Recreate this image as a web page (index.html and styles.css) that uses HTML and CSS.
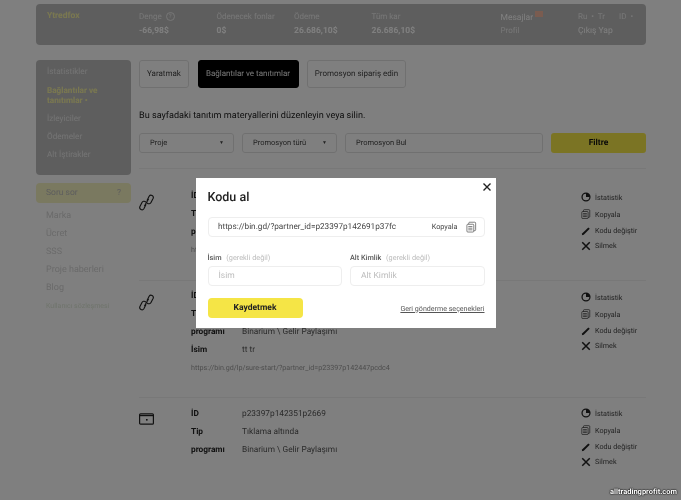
FILE: index.html
```html
<!DOCTYPE html>
<html lang="tr">
<head>
    <meta charset="UTF-8">
    <meta name="viewport" content="width=device-width, initial-scale=1.0">
    <title>Kodu al</title>
    <link rel="stylesheet" href="styles.css">
</head>
<body>
    <div class="page">
        <header class="topbar">
            <div class="brand">Ytredfox</div>
            <div class="stat">
                <div class="stat-label">Denge <span class="help">?</span></div>
                <div class="stat-value">-66,98$</div>
            </div>
            <div class="stat">
                <div class="stat-label">Ödenecek fonlar</div>
                <div class="stat-value">0$</div>
            </div>
            <div class="stat">
                <div class="stat-label">Ödeme</div>
                <div class="stat-value">26.686,10$</div>
            </div>
            <div class="stat stat-profit">
                <div class="stat-label">Tüm kar</div>
                <div class="stat-value">26.686,10$</div>
            </div>
            <div class="stat">
                <div class="stat-label stat-strong">Mesajlar <span class="msg-badge"></span></div>
                <div class="stat-label">Profil</div>
            </div>
            <div class="stat stat-lang">
                <div class="stat-label">Ru &nbsp;•&nbsp; Tr</div>
                <div class="stat-label stat-strong">Çıkış Yap</div>
            </div>
            <div class="stat">
                <div class="stat-label">ID &nbsp;•</div>
            </div>
        </header>

        <div class="layout">
            <aside class="side">
                <nav class="side-menu">
                    <a>İstatistikler</a>
                    <a class="current">Bağlantılar ve tanıtımlar •</a>
                    <a>İzleyiciler</a>
                    <a>Ödemeler</a>
                    <a>Alt İştirakler</a>
                </nav>
                <div class="ask"><span>Soru sor</span><span>?</span></div>
                <nav class="side-links">
                    <a>Marka</a>
                    <a>Ücret</a>
                    <a>SSS</a>
                    <a>Proje haberleri</a>
                    <a>Blog</a>
                    <a class="faint">Kullanıcı sözleşmesi</a>
                </nav>
            </aside>

            <main class="content">
                <div class="tabs">
                    <div class="tab tab-create">Yaratmak</div>
                    <div class="tab tab-links active">Bağlantılar ve tanıtımlar</div>
                    <div class="tab tab-order">Promosyon sipariş edin</div>
                </div>
                <p class="intro">Bu sayfadaki tanıtım materyallerini düzenleyin veya silin.</p>
                <div class="filters">
                    <div class="select"><span>Proje</span><span class="arrow">▼</span></div>
                    <div class="select"><span>Promosyon türü</span><span class="arrow">▼</span></div>
                    <div class="search">Promosyon Bul</div>
                    <div class="filter-btn">Filtre</div>
                </div>

                <section class="promo promo-first">
                    <svg class="promo-icon" viewBox="0 0 16 20"><use href="#i-link"/></svg>
                    <div class="promo-info">
                        <div class="info-row"><b>İD</b><span>p23397p142691p37fc</span></div>
                        <div class="info-row"><b>Tip</b><span>Tıklama altında</span></div>
                        <div class="info-row"><b>programı</b><span>Binarium \ Gelir Paylaşımı</span></div>
                        <div class="promo-url">https://bin.gd/?partner_id=p23397p142691p37fc</div>
                    </div>
                    <div class="actions">
                        <div class="action"><svg viewBox="0 0 12 12"><use href="#i-pie"/></svg>İstatistik</div>
                        <div class="action"><svg viewBox="0 0 12 12"><use href="#i-copy"/></svg>Kopyala</div>
                        <div class="action"><svg viewBox="0 0 12 12"><use href="#i-pen"/></svg>Kodu değiştir</div>
                        <div class="action"><svg viewBox="0 0 12 12"><use href="#i-x"/></svg>Silmek</div>
                    </div>
                </section>

                <section class="promo promo-second">
                    <svg class="promo-icon" viewBox="0 0 16 20"><use href="#i-link"/></svg>
                    <div class="promo-info">
                        <div class="info-row"><b>İD</b><span>p23397p142447pcdc4</span></div>
                        <div class="info-row"><b>Tip</b><span>Tıklama altında</span></div>
                        <div class="info-row"><b>programı</b><span>Binarium \ Gelir Paylaşımı</span></div>
                        <div class="info-row"><b>İsim</b><span>tt tr</span></div>
                        <div class="promo-url">https://bin.gd/lp/sure-start/?partner_id=p23397p142447pcdc4</div>
                    </div>
                    <div class="actions">
                        <div class="action"><svg viewBox="0 0 12 12"><use href="#i-pie"/></svg>İstatistik</div>
                        <div class="action"><svg viewBox="0 0 12 12"><use href="#i-copy"/></svg>Kopyala</div>
                        <div class="action"><svg viewBox="0 0 12 12"><use href="#i-pen"/></svg>Kodu değiştir</div>
                        <div class="action"><svg viewBox="0 0 12 12"><use href="#i-x"/></svg>Silmek</div>
                    </div>
                </section>

                <section class="promo promo-third">
                    <svg class="promo-icon promo-icon-wide" viewBox="0 0 15 12"><use href="#i-window"/></svg>
                    <div class="promo-info">
                        <div class="info-row"><b>İD</b><span>p23397p142351p2669</span></div>
                        <div class="info-row"><b>Tip</b><span>Tıklama altında</span></div>
                        <div class="info-row"><b>programı</b><span>Binarium \ Gelir Paylaşımı</span></div>
                    </div>
                    <div class="actions">
                        <div class="action"><svg viewBox="0 0 12 12"><use href="#i-pie"/></svg>İstatistik</div>
                        <div class="action"><svg viewBox="0 0 12 12"><use href="#i-copy"/></svg>Kopyala</div>
                        <div class="action"><svg viewBox="0 0 12 12"><use href="#i-pen"/></svg>Kodu değiştir</div>
                        <div class="action"><svg viewBox="0 0 12 12"><use href="#i-x"/></svg>Silmek</div>
                    </div>
                </section>
            </main>
        </div>
    </div>

    <div class="overlay"></div>

    <div class="modal">
        <svg class="modal-close" viewBox="0 0 10 10"><path d="M1.5 1.5l7 7M8.5 1.5l-7 7"/></svg>
        <h2 class="modal-title">Kodu al</h2>
        <div class="code-field">
            <span class="code-url">https://bin.gd/?partner_id=p23397p142691p37fc</span>
            <span class="code-copy">Kopyala</span>
            <svg class="code-icon" viewBox="0 0 12 12"><use href="#i-copy"/></svg>
        </div>
        <div class="modal-fields">
            <div>
                <div class="field-label">İsim <span>(gerekli değil)</span></div>
                <div class="field-input">İsim</div>
            </div>
            <div>
                <div class="field-label">Alt Kimlik <span>(gerekli değil)</span></div>
                <div class="field-input">Alt Kimlik</div>
            </div>
        </div>
        <div class="modal-foot">
            <div class="save-btn">Kaydetmek</div>
            <a class="back-link">Geri gönderme seçenekleri</a>
        </div>
    </div>

    <div class="watermark">alltradingprofit.com</div>

    <svg class="icon-defs" width="0" height="0">
        <defs>
            <g id="i-link" fill="none" stroke="currentColor" stroke-width="1.2" stroke-linecap="round">
                <path d="M8.700 7.500L10.800 3.400a2.400 2.400 0 0 1 4.200 2.300L12.800 10a2.400 2.400 0 0 1-3.900.6"/>
                <path d="M7.300 12.500L5.200 16.600a2.400 2.400 0 0 1-4.200-2.300L3.200 10a2.400 2.400 0 0 1 3.900-.6"/>
                <path d="M6 13.500l4-7"/>
            </g>
            <g id="i-pie">
                <path fill="currentColor" fill-rule="evenodd" d="M6 .5a5.500 5.500 0 1 1 0 11 5.500 5.500 0 0 1 0-11zM6 2a4 4 0 1 0 4 4H6z"/>
            </g>
            <g id="i-copy" fill="none" stroke="currentColor" stroke-width=".8">
                <rect x="1" y="3" width="7.500" height="8.500" rx="1"/>
                <path d="M3 3V1.800a1 1 0 0 1 1-1h5.500a1 1 0 0 1 1 1V9a1 1 0 0 1-1 1h-1"/>
                <path d="M2.500 5.500h4.500M2.500 7.300h4.500M2.500 9.100h4.500"/>
            </g>
            <g id="i-pen">
                <path fill="currentColor" d="M1 11l.6-2.300 7.200-7 1.700 1.700-7.200 7z"/>
            </g>
            <g id="i-x">
                <path fill="none" stroke="currentColor" stroke-width="1.800" d="M1.500 1.500l9 9M10.500 1.500l-9 9"/>
            </g>
            <g id="i-window" fill="none" stroke="currentColor">
                <rect x=".6" y=".8" width="13.800" height="10.400" rx="1" stroke-width="1.200"/>
                <path d="M.6 2.600h13.800" stroke-width="1.200"/>
                <rect x="7" y="6" width="1.600" height="1.600" fill="currentColor" stroke="none"/>
            </g>
        </defs>
    </svg>
</body>
</html>
```

FILE: styles.css
```css
/* Base */
* {
    margin: 0;
    padding: 0;
    box-sizing: border-box;
}

html, body {
    height: 100%;
    overflow: hidden;
}

body {
    background-color: #fff;
    color: #333;
    font-family: Roboto, "Noto Sans", sans-serif;
    text-rendering: geometricPrecision;
}

.page {
    padding: 4px 35px 0 36px;
    filter: blur(0.5px);
}

/* Top bar */
.topbar {
    display: flex;
    height: 41px;
    padding: 7px 0 0 11px;
    background-color: #bdbdbd;
    border-radius: 4px;
    color: #eee;
}

.brand {
    flex: none;
    width: 92px;
    font-size: 8.500px;
    font-weight: 700;
    color: #f4f0a0;
}

.stat {
    flex: none;
    width: 77.500px;
    font-size: 8px;
}

.stat-profit {
    width: 129px;
}

.stat-lang {
    width: 41px;
}

.stat-label {
    height: 14px;
    line-height: 12px;
    white-space: nowrap;
}

.stat-strong {
    color: #fff;
    font-size: 8.500px;
}

.stat-value {
    line-height: 12px;
    font-size: 8.500px;
    font-weight: 700;
    color: #fff;
}

.help {
    display: inline-block;
    width: 9px;
    height: 9px;
    margin-left: 2px;
    border: 1px solid #eee;
    border-radius: 50%;
    font-size: 6px;
    line-height: 7px;
    text-align: center;
    vertical-align: 1px;
}

.msg-badge {
    display: inline-block;
    width: 8px;
    height: 6px;
    background-color: #f5b8a0;
    vertical-align: 3px;
}

/* Layout */
.layout {
    display: grid;
    grid-template-columns: 95px 507px;
    gap: 8px;
    margin-top: 15px;
}

/* Sidebar */
.side-menu {
    height: 115px;
    padding: 7px 11px 0;
    background-color: #bdbdbd;
    border-radius: 4px;
    color: #e8e8e8;
    font-size: 8.200px;
}

.side-menu a {
    display: block;
    margin-bottom: 7px;
    line-height: 11px;
}

.side-menu a.current {
    margin-top: 8px;
    margin-bottom: 8px;
    line-height: 10px;
    font-weight: 700;
    color: #f4f0a0;
}

.ask {
    display: flex;
    justify-content: space-between;
    height: 20px;
    margin-top: 8px;
    padding: 0 10px;
    background-color: #f4f2c0;
    border-radius: 4px;
    color: #bbb;
    font-size: 8.500px;
    line-height: 20px;
}

.side-links {
    margin-top: 4px;
    padding-left: 10px;
    color: #d4d4d4;
    font-size: 9px;
}

.side-links a {
    display: block;
    height: 18px;
    line-height: 18px;
    white-space: nowrap;
}

.side-links a.faint {
    color: #dfe8d8;
    font-size: 7px;
}

/* Tabs */
.tabs {
    display: flex;
    gap: 8.500px;
}

.tab {
    height: 28px;
    border: 1px solid #e0e0e0;
    border-radius: 3px;
    color: #444;
    font-size: 8px;
    line-height: 26px;
    text-align: center;
    white-space: nowrap;
}

.tab-create {
    width: 50px;
}

.tab-links {
    width: 101px;
}

.tab-order {
    width: 99px;
}

.tab.active {
    background-color: #000;
    border-color: #000;
    color: #eee;
}

.intro {
    margin-top: 22px;
    color: #222;
    font-size: 9.100px;
    line-height: 13px;
}

/* Filters */
.filters {
    display: flex;
    gap: 8px;
    height: 20px;
    margin-top: 10px;
    font-size: 7.500px;
    line-height: 18px;
    color: #444;
}

.select, .search {
    display: flex;
    justify-content: space-between;
    padding: 0 9px 0 10px;
    border: 1px solid #e0e0e0;
    border-radius: 3px;
}

.select {
    width: 95px;
}

.search {
    width: 198px;
}

.arrow {
    font-size: 5px;
}

.filter-btn {
    width: 95px;
    background-color: #f7e948;
    border-radius: 3px;
    color: #111;
    font-size: 8.500px;
    font-weight: 700;
    line-height: 20px;
    text-align: center;
}

/* Promo rows */
.promo {
    display: flex;
    border-top: 1px solid #f0f0f0;
    font-size: 8.300px;
}

.promo-first {
    height: 112px;
    margin-top: 15px;
    padding-top: 18px;
}

.promo-second {
    height: 117px;
    padding-top: 6px;
}

.promo-third {
    height: 100px;
    padding-top: 7px;
}

.promo-icon {
    flex: none;
    width: 15px;
    height: 19px;
    margin-top: 6px;
    color: #222;
}

.promo-icon-wide {
    height: 12px;
    margin-top: 7.500px;
}

.promo-info {
    width: 390px;
    margin-left: 37px;
}

.info-row {
    display: flex;
    height: 18px;
    line-height: 18px;
    color: #555;
}

.info-row b {
    width: 51px;
    color: #222;
    font-weight: 700;
}

.promo-url {
    color: #999;
    font-size: 7.150px;
    line-height: 17px;
    white-space: nowrap;
}

.actions {
    flex: none;
    margin-top: 2px;
    color: #444;
    font-size: 7.200px;
}

.promo-third .actions {
    margin-top: 0;
}

.action {
    display: flex;
    align-items: center;
    gap: 4px;
    height: 16.700px;
    white-space: nowrap;
}

.action:last-child {
    margin-top: -1.700px;
}

.action svg {
    width: 10px;
    height: 10px;
    color: #222;
}

/* Modal */
.overlay {
    position: fixed;
    inset: 0;
    background-color: rgba(0, 0, 0, 0.5);
}

.modal {
    position: fixed;
    left: 196px;
    top: 178px;
    width: 300px;
    height: 150px;
    padding: 12px 11.500px 0;
    background-color: #fff;
    color: #222;
    filter: blur(0.3px);
}

.modal-close {
    position: absolute;
    right: 4px;
    top: 4px;
    width: 10px;
    height: 10px;
    fill: none;
    stroke: #222;
    stroke-width: 1.400;
}

.modal-title {
    font-size: 12.500px;
    font-weight: 500;
    line-height: 16px;
}

.code-field {
    display: flex;
    align-items: center;
    height: 20px;
    margin-top: 10.500px;
    padding: 0 7px 0 9.500px;
    border: 1px solid #eee;
    border-radius: 4px;
    font-size: 8.200px;
    color: #444;
}

.code-url {
    flex: 1;
    white-space: nowrap;
}

.code-copy {
    margin-right: 8px;
    font-size: 7.300px;
}

.code-icon {
    width: 11px;
    height: 12px;
    color: #555;
}

.modal-fields {
    display: grid;
    grid-template-columns: 1fr 1fr;
    gap: 8px;
    margin-top: 15.500px;
}

.field-label {
    font-size: 7.300px;
    font-weight: 500;
    line-height: 11px;
    color: #555;
}

.field-label span {
    margin-left: 3px;
    color: #bbb;
    font-weight: 400;
}

.field-input {
    height: 20px;
    margin-top: 3px;
    padding-left: 10px;
    border: 1px solid #eee;
    border-radius: 4px;
    color: #bbb;
    font-size: 8.500px;
    line-height: 18px;
}

.modal-foot {
    display: flex;
    align-items: center;
    justify-content: space-between;
    margin-top: 12px;
}

.save-btn {
    width: 95px;
    height: 20px;
    background-color: #f5e546;
    border-radius: 4px;
    color: #222;
    font-size: 8.500px;
    font-weight: 700;
    line-height: 20px;
    text-align: center;
}

.back-link {
    color: #555;
    font-size: 7.100px;
    text-decoration: underline;
}

.watermark {
    position: fixed;
    right: 4px;
    bottom: 4px;
    color: #fff;
    font-size: 7.500px;
    font-weight: 700;
    text-shadow: 0 0 1px #000, 0 0 1px #000, 0 0 2px #000;
}

.icon-defs {
    position: absolute;
}
```
